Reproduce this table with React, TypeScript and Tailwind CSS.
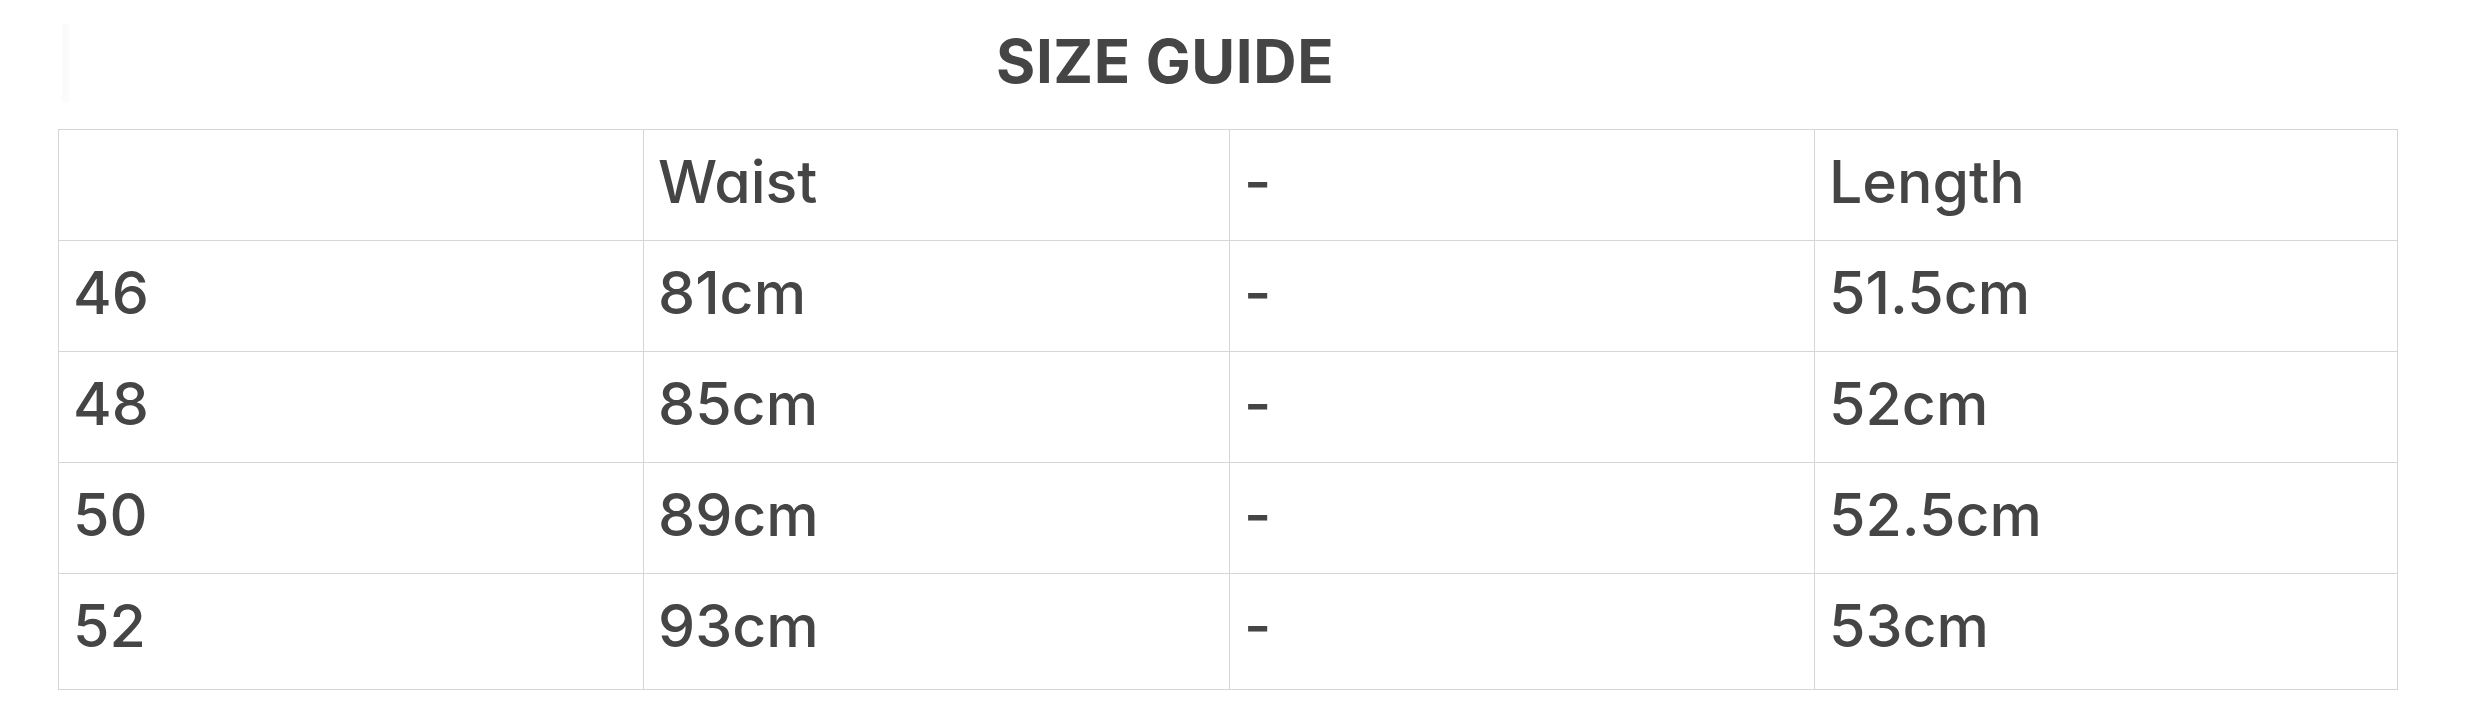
import React from "react";

const rows: [string, string, string, string][] = [
  ["", "Waist", "-", "Length"],
  ["46", "81cm", "-", "51.5cm"],
  ["48", "85cm", "-", "52cm"],
  ["50", "89cm", "-", "52.5cm"],
  ["52", "93cm", "-", "53cm"],
];

export default function App() {
  return (
    <div className="w-full h-[717px] bg-white text-[#454545] font-['Inter','Liberation_Sans',sans-serif] [font-feature-settings:'cv11']">
      <div className="flex h-[129px] items-start">
        <div className="ml-[62px] mt-[23px] w-[7px] h-[80px] rounded-sm bg-[#fbfbfb]" />
        <h1 className="ml-[927px] pt-[31px] text-[60px] leading-[60px] font-bold tracking-[0.6px]">
          SIZE GUIDE
        </h1>
      </div>
      <div className="ml-[58px] w-[2340px] border-l border-t border-[#d6d6d6]">
        {rows.map((r, i) => (
          <div
            key={i}
            className={`grid grid-cols-[585px_586px_585px_1fr] border-b border-[#d6d6d6] ${
              i === rows.length - 1 ? "h-[116px]" : "h-[111px]"
            }`}
          >
            {r.map((c, j) => (
              <div
                key={j}
                className="border-r border-[#d6d6d6] pl-[14px] pt-[23px] text-[59px] leading-[58px] [font-weight:550]"
              >
                {c}
              </div>
            ))}
          </div>
        ))}
      </div>
    </div>
  );
}
